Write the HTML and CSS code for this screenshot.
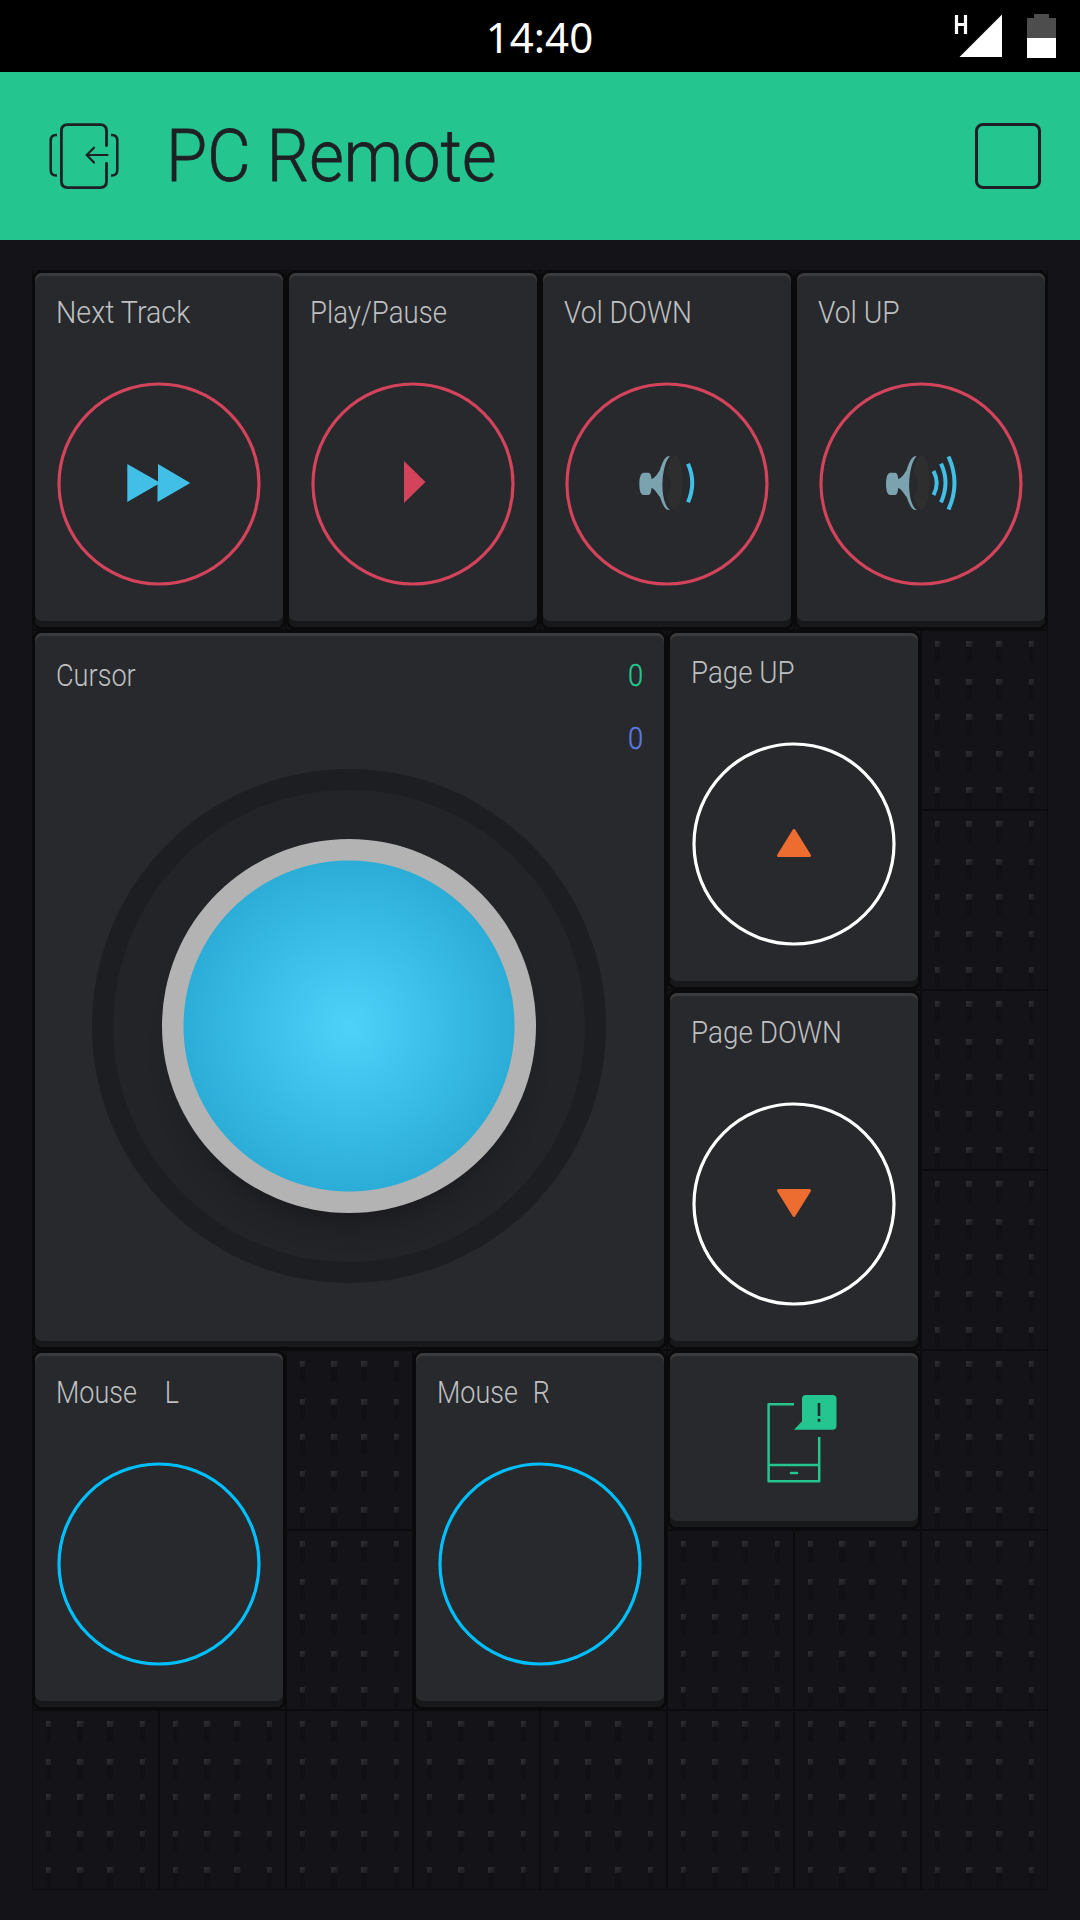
FILE: index.html
```html
<!DOCTYPE html>
<html lang="en">
<head>
<meta charset="utf-8">
<title>PC Remote</title>
<link rel="stylesheet" href="styles.css">
</head>
<body>
<div class="status">
  <span class="clock">14:40</span>
  <div class="status-icons">
    <svg class="signal" width="49" height="46" viewBox="954 13 49 46">
      <path d="M956.5 15v19M965.500 15v19M956.500 24.500h9" fill="none" stroke="#fff" stroke-width="3.200"/>
      <path d="M959.500 57L1002 14.500V57z" fill="#fff"/>
    </svg>
    <svg class="battery" width="29" height="46" viewBox="1027 13 29 46">
      <path d="M1034 14h15v4h7v20h-29V18h7z" fill="#4d4d4d"/>
      <path d="M1027 38h29v20h-29z" fill="#fff"/>
    </svg>
  </div>
</div>
<header class="header">
  <svg class="exit" width="72" height="70" viewBox="48 121 72 70" fill="none" stroke="#1e2023">
    <path d="M106.500 145.500V131q0-6.300-6.300-6.300H67.700q-6.300 0-6.300 6.300V181.300q0 6.300 6.300 6.300H100.200q6.300 0 6.300-6.300V163.500" stroke-width="2.800" stroke-linecap="round"/>
    <path d="M57 135h-.8q-5.500 0-5.500 5.500V170q0 5.500 5.500 5.500h.8M111 135h.8q5.500 0 5.500 5.500V170q0 5.500-5.500 5.500h-.8" stroke-width="2.500"/>
    <path d="M107.500 155H87M94 147.700L86.700 155l7.300 7.500" stroke-width="2.200" stroke-linecap="round"/>
  </svg>
  <h1 class="title">PC Remote</h1>
  <div class="stop"></div>
</header>
<main class="board">
  <svg class="sockets" width="1016" height="1620">
    <defs>
      <linearGradient id="pin" x1="0" y1="0" x2="1" y2="1">
        <stop offset="0" stop-color="#323236"/><stop offset="1" stop-color="#1b1b1f"/>
      </linearGradient>
      <g id="row5">
        <path d="M14 5h5v16h-5zM45 5h6v16h-6zM75 5h6v16h-6zM108 5h5v16h-5z" fill="#111115"/>
        <rect x="14" width="5" height="6" fill="url(#pin)"/>
        <rect x="45" width="6.500" height="6" fill="url(#pin)"/>
        <rect x="75" width="6.500" height="6" fill="url(#pin)"/>
        <rect x="108" width="5" height="6" fill="url(#pin)"/>
      </g>
      <pattern id="cell" width="127" height="180" patternUnits="userSpaceOnUse">
        <rect width="127" height="180" fill="#0c0c0f"/>
        <rect x="1" y="1" width="125" height="178" fill="#141318"/>
        <use href="#row5" y="11"/><use href="#row5" y="49"/><use href="#row5" y="84"/><use href="#row5" y="121"/><use href="#row5" y="157"/>
      </pattern>
    </defs>
    <rect width="1016" height="1620" fill="url(#cell)"/>
  </svg>

  <section class="card next">
    <h2 class="label l-next">Next Track</h2>
    <svg class="ring red" width="204" height="204" viewBox="57 382 204 204">
      <circle cx="159" cy="484" r="100"/>
      <path d="M127.300 464L158 481.500V464L190.300 483 157.500 502V484.500L127.300 502z" fill="#41bfe7"/>
    </svg>
  </section>
  <section class="card play">
    <h2 class="label l-play">Play/Pause</h2>
    <svg class="ring red" width="204" height="204" viewBox="311 382 204 204">
      <circle cx="413" cy="484" r="100"/>
      <path d="M404 461L425.500 482 404 503z" fill="#d3435c"/>
    </svg>
  </section>
  <section class="card voldown">
    <h2 class="label l-vd">Vol DOWN</h2>
    <svg class="ring red" width="204" height="204" viewBox="565 382 204 204">
      <circle cx="667" cy="484" r="100"/>
      <g id="speaker">
        <path d="M674.500 455.500c11 0 11 54 0 54-3 0-6-6-8-13.500 6-5 6-18 0-22 2-11 5-18.500 8-18.500z" fill="#2f2e2e"/>
        <path d="M643 472.700h5.500q2.500 0 3 6.300c4-1 7-7 8.500-9 2-7 5-13.500 8.500-13.700h1.500c-9 8-11 46 0 53.700h-1.500c-3.500 0-6.500-7-8.500-13-2-2-5-8-8.500-9q-.5 7-3 7H643q-3.700-1-3.700-11t3.700-11.300z" fill="#7aa2af"/>
      </g>
      <path class="wave" d="M688 463.700q8.500 19 0 38.600"/>
    </svg>
  </section>
  <section class="card volup">
    <h2 class="label l-vu">Vol UP</h2>
    <svg class="ring red" width="204" height="204" viewBox="819 382 204 204">
      <circle cx="921" cy="484" r="100"/>
      <use href="#speaker" x="246.700"/>
      <path class="wave" d="M933.500 471q6.500 12 0 24M941 463.700q9 19 0 38.600M948.500 456.500q12 26.500 0 53"/>
    </svg>
  </section>

  <section class="card cursor">
    <div class="cursor-head">
      <h2 class="label l-cur">Cursor</h2>
      <div class="values"><span class="vx">0</span><span class="vy">0</span></div>
    </div>
    <div class="well"><div class="stick"></div></div>
  </section>
  <section class="card pageup">
    <h2 class="label l-pu">Page UP</h2>
    <svg class="ring white" width="204" height="204" viewBox="692 742 204 204">
      <circle cx="794" cy="844" r="100"/>
      <path class="arrow" d="M794 830.500L809.500 855.500H778.500z"/>
    </svg>
  </section>
  <section class="card pagedown">
    <h2 class="label l-pd">Page DOWN</h2>
    <svg class="ring white" width="204" height="204" viewBox="692 1102 204 204">
      <circle cx="794" cy="1204" r="100"/>
      <path class="arrow" d="M794 1215.500L809.500 1190.500H778.500z"/>
    </svg>
  </section>
  <section class="card mousel">
    <h2 class="label l-ml"><span>Mouse</span><span>L</span></h2>
    <svg class="ring blue" width="204" height="204"><circle cx="102" cy="102" r="100"/></svg>
  </section>
  <section class="card mouser">
    <h2 class="label l-mr"><span>Mouse</span><span>R</span></h2>
    <svg class="ring blue" width="204" height="204"><circle cx="102" cy="102" r="100"/></svg>
  </section>
  <section class="card notify">
    <svg width="72" height="90" viewBox="766 1394 72 90">
      <path d="M794 1404.300H768.600V1481.200H819.200V1437M768.600 1465H819.200" fill="none" stroke="#24c58f" stroke-width="2.500" stroke-linejoin="round"/>
      <path d="M791 1473h6" stroke="#24c58f" stroke-width="2.600" stroke-linecap="round"/>
      <path d="M806 1395h26.500q4 0 4 4v26.700q0 4-4 4H794l8-8.500V1399q0-4 4-4z" fill="#24c58f"/>
      <path d="M819 1403v13M819 1418.700v3" stroke="#28292c" stroke-width="2.600"/>
    </svg>
  </section>
</main>
</body>
</html>
```
FILE: styles.css
```css
* { box-sizing: border-box; margin: 0; padding: 0; }

body {
  width: 1080px;
  height: 1920px;
  overflow: hidden;
  background: #141318;
  font-family: Roboto, "Liberation Sans", sans-serif;
  font-weight: 300;
}

svg { display: block; }

.status {
  height: 72px;
  background: #000;
  display: grid;
  grid-template-columns: 1fr auto 1fr;
  align-items: start;
}
.clock {
  grid-column: 2;
  color: #fff;
  font: 400 42px/74px "Noto Sans", sans-serif;
  padding-right: 1px;
}
.status-icons {
  display: flex;
  justify-content: flex-end;
  gap: 24px;
  padding: 13px 24px 0 0;
}

.header {
  height: 168px;
  background: #24c58f;
  display: flex;
  align-items: center;
  justify-content: space-between;
  padding: 0 39px 0 48px;
}
.title {
  flex: 1;
  margin-left: 46px;
  color: #1e2023;
  font-size: 73px;
  font-weight: 300;
  line-height: 168px;
  transform: scaleX(0.915);
  transform-origin: left;
  -webkit-text-stroke: 0.8px #1e2023;
}
.stop {
  width: 66px;
  height: 66px;
  border: 3px solid #1e2023;
  border-radius: 8px;
}

.board {
  margin: 30px 32px;
  width: 1016px;
  height: 1620px;
  display: grid;
  grid-template-columns: repeat(8, 127px);
  grid-template-rows: repeat(9, 180px);
}
.sockets { grid-area: 1 / 1 / -1 / -1; }

.card {
  margin: 3px;
  background: #28292c;
  border-radius: 7px;
  box-shadow: inset 0 3px #3b3b3e, inset 0 -6px #17181a, 0 0 0 3px #0a0a0c;
  display: flex;
  flex-direction: column;
  align-items: center;
}
.next { grid-area: 1 / 1 / 3 / 3; }
.play { grid-area: 1 / 3 / 3 / 5; }
.voldown { grid-area: 1 / 5 / 3 / 7; }
.volup { grid-area: 1 / 7 / 3 / 9; }
.cursor { grid-area: 3 / 1 / 7 / 6; }
.pageup { grid-area: 3 / 6 / 5 / 8; }
.pagedown { grid-area: 5 / 6 / 7 / 8; }
.mousel { grid-area: 7 / 1 / 9 / 3; }
.mouser { grid-area: 7 / 4 / 9 / 6; }
.notify { grid-area: 7 / 6 / 8 / 8; padding-top: 41px; padding-left: 16px; }

.label {
  align-self: flex-start;
  height: 87px;
  margin: 22px 0 0 21px;
  color: #bfc0c2;
  font-size: 31px;
  font-weight: 300;
  line-height: 36px;
  white-space: nowrap;
  display: flex;
  transform-origin: left;
}
.l-next { transform: scaleX(0.925); }
.l-play { transform: scaleX(0.89); }
.l-vd { transform: scaleX(0.905); }
.l-vu { transform: scaleX(0.91); }
.l-pu { transform: scaleX(0.895); }
.l-pd { transform: scaleX(0.9); }
.l-ml { transform: scaleX(0.87); gap: 32px; }
.l-mr { transform: scaleX(0.87); gap: 17px; }
.l-cur { transform: scaleX(0.875); margin-top: 25px; }

.ring circle { fill: none; stroke-width: 3.2; }
.red circle { stroke: #d3435c; }
.white circle { stroke: #fff; }
.blue circle { stroke: #00bfff; }
.wave { fill: none; stroke: #41bfe7; stroke-width: 4; }
.arrow {
  fill: #ed6d30;
  stroke: #ed6d30;
  stroke-width: 3;
  stroke-linejoin: round;
}

.cursor-head {
  align-self: stretch;
  height: 136px;
  display: flex;
  justify-content: space-between;
}
.values {
  display: flex;
  flex-direction: column;
  padding: 25px 20px 0 0;
  gap: 27px;
  font-size: 31px;
  line-height: 36px;
}
.values span {
  transform: scaleX(0.88);
  -webkit-text-stroke: 0.4px currentColor;
}
.vx { color: #24c58f; }
.vy { color: #5c7be0; }
.well {
  align-self: flex-start;
  margin-left: 57px;
  width: 514px;
  height: 514px;
  border-radius: 50%;
  background: #232428;
  border: 21px solid #1d1e21;
  display: flex;
  align-items: center;
  justify-content: center;
}
.stick {
  width: 374px;
  height: 374px;
  border-radius: 50%;
  background: radial-gradient(circle closest-side, #4ed2fa, #2badd7 165px, #b3b3b3 166px);
  box-shadow: 0 26px 24px -16px rgba(20, 20, 23, 0.6);
}
```
